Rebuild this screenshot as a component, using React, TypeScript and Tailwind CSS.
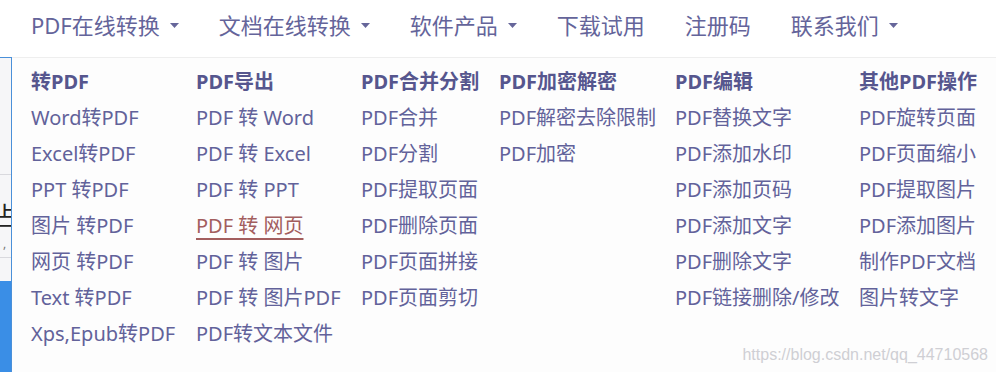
const navItems = [
  { label: 'PDF在线转换', caret: true },
  { label: '文档在线转换', caret: true },
  { label: '软件产品', caret: true },
  { label: '下载试用', caret: false },
  { label: '注册码', caret: false },
  { label: '联系我们', caret: true },
];

const columns = [
  {
    title: '转PDF',
    width: 'w-[165px]',
    links: ['Word转PDF', 'Excel转PDF', 'PPT 转PDF', '图片 转PDF', '网页 转PDF', 'Text 转PDF', 'Xps,Epub转PDF'],
  },
  {
    title: 'PDF导出',
    width: 'w-[165px]',
    links: ['PDF 转 Word', 'PDF 转 Excel', 'PDF 转 PPT', 'PDF 转 网页', 'PDF 转 图片', 'PDF 转 图片PDF', 'PDF转文本文件'],
  },
  {
    title: 'PDF合并分割',
    width: 'w-[138px]',
    links: ['PDF合并', 'PDF分割', 'PDF提取页面', 'PDF删除页面', 'PDF页面拼接', 'PDF页面剪切'],
  },
  {
    title: 'PDF加密解密',
    width: 'w-[176px]',
    links: ['PDF解密去除限制', 'PDF加密'],
  },
  {
    title: 'PDF编辑',
    width: 'w-[184px]',
    links: ['PDF替换文字', 'PDF添加水印', 'PDF添加页码', 'PDF添加文字', 'PDF删除文字', 'PDF链接删除/修改'],
  },
  {
    title: '其他PDF操作',
    width: 'w-[130px]',
    links: ['PDF旋转页面', 'PDF页面缩小', 'PDF提取图片', 'PDF添加图片', '制作PDF文档', '图片转文字'],
  },
];

const hovered = 'PDF 转 网页';

function Caret() {
  return (
    <svg className="ml-[10px] mt-[2px]" width="9" height="5" viewBox="0 0 9 5">
      <path d="M0 0h9L4.5 5z" fill="#66669a" />
    </svg>
  );
}

export default function App() {
  return (
    <div className="relative w-[996px] h-[372px] overflow-hidden bg-white font-['Noto_Sans','Noto_Sans_CJK_SC',sans-serif]">
      {/* Top nav */}
      <nav className="h-[57px] flex items-center pb-[8px] pl-[31px] gap-[40px] bg-white">
        {navItems.map((n) => (
          <a key={n.label} href="#" className="flex items-center text-[22px] leading-none text-[#64649a]">
            {n.label}
            {n.caret && <Caret />}
          </a>
        ))}
      </nav>

      <div className="flex h-[315px]">
        {/* Page behind the dropdown */}
        <div className="w-[12px] overflow-hidden flex flex-col bg-[#f6f6f8] border-r border-[#4a90d9] border-t">
          <div className="h-[117px] shrink-0 border-b border-[#d9d9de]" />
          <div className="h-[30px] shrink-0 mt-[25px] -ml-[8px] text-[26px] leading-[30px] text-[#222] font-['Noto_Sans_CJK_SC',sans-serif]">
            占
          </div>
          <div className="h-[27px] shrink-0 text-[12px] leading-[27px] text-[#777] pl-[3px]">,</div>
          <div className="h-[24px] shrink-0 border-t border-[#d9d9de]" />
          <div className="flex-1 bg-[#3a8ee6]" />
        </div>

        {/* Dropdown panel */}
        <div className="flex-1 flex pl-[19px] pt-[6px] bg-[#fdfdfd] border-t border-[#eeeeee]">
          {columns.map((c) => (
            <div key={c.title} className={`${c.width} shrink-0 flex flex-col`}>
              <div className="h-[36px] leading-[36px] text-[20px] font-bold text-[#56568e] whitespace-nowrap">
                {c.title}
              </div>
              {c.links.map((l) => (
                <a
                  key={l}
                  href="#"
                  className={
                    l === hovered
                      ? 'h-[36px] leading-[36px] text-[20px] whitespace-nowrap text-[#a35e5e] underline decoration-2 underline-offset-[5px]'
                      : 'h-[36px] leading-[36px] text-[20px] whitespace-nowrap text-[#62629a]'
                  }
                >
                  {l}
                </a>
              ))}
            </div>
          ))}
        </div>
      </div>

      {/* Watermark */}
      <div className="absolute right-[8px] bottom-[9px] text-[16px] leading-none text-[#cfcfd4] font-['Liberation_Sans',sans-serif]">
        https://blog.csdn.net/qq_44710568
      </div>
    </div>
  );
}
